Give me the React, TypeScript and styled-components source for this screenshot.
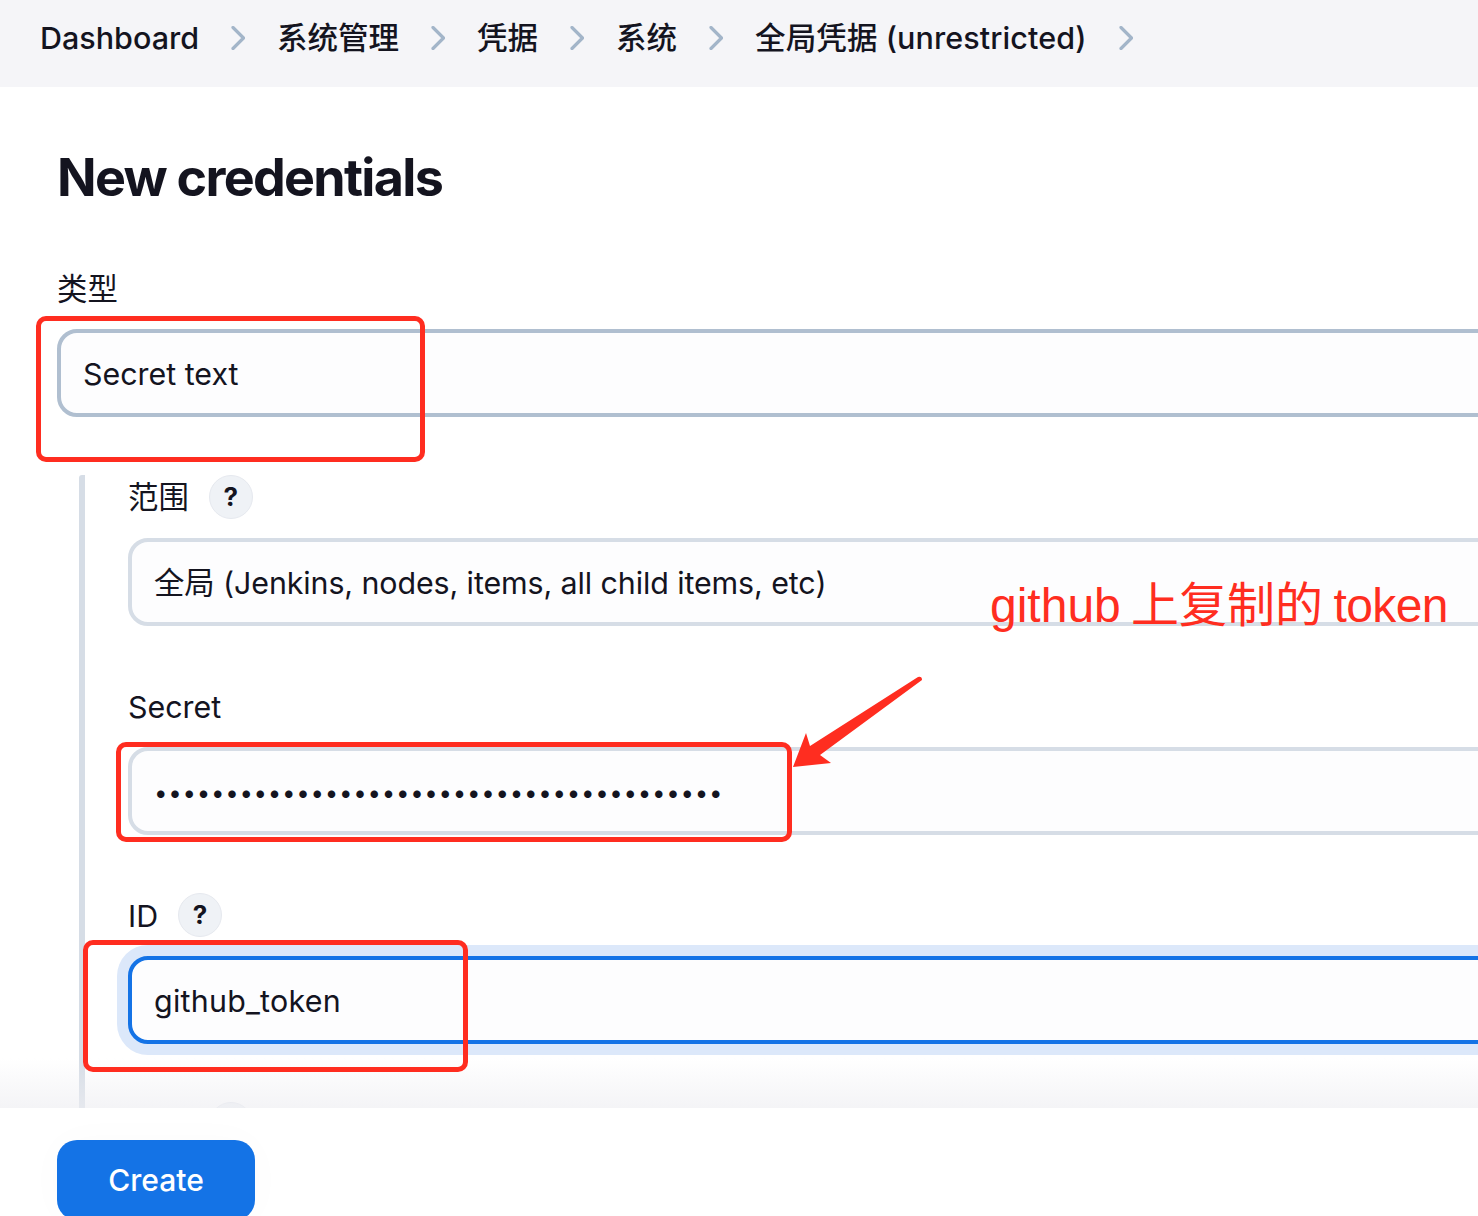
import React from "react"
import styled, { createGlobalStyle } from "styled-components"

const GlobalStyle = createGlobalStyle`
    html, body {
        margin: 0;
        padding: 0;
        background: #fff;
    }
    body {
        font-family: Inter, "Noto Sans CJK SC", sans-serif;
        color: #14141f;
    }
`

const Page = styled.div`
    position: relative;
    width: 1478px;
    height: 1216px;
    overflow: hidden;
    background: #fff;
`

const Breadcrumbs = styled.nav`
    display: flex;
    align-items: center;
    gap: 32px;
    height: 87px;
    padding: 0 0 11px 40px;
    box-sizing: border-box;
    background: #f5f5f8;
    font-size: 30.5px;
    font-weight: 500;
`

const Crumb = styled.span`
    white-space: nowrap;
    line-height: 40px;
    &:nth-last-of-type(1) {
        letter-spacing: 0.1px;
    }
`

const Title = styled.h1`
    margin: 0;
    padding: 57px 0 0 57px;
    font-size: 52px;
    line-height: 68px;
    font-weight: 700;
    letter-spacing: -1.7px;
`

const Form = styled.div`
    width: 1700px;
    padding: 54px 0 0 57px;
`

const Row = styled.div`
    margin-bottom: 58px;
`

const LabelRow = styled.div`
    display: flex;
    align-items: center;
    gap: 20px;
    height: 44px;
    margin-bottom: 19px;
    font-size: 30.4px;
    font-weight: 400;
    line-height: 40px;
`

const LabelText = styled.span`
    padding-top: 2px;
`

const Help = styled.span`
    display: flex;
    align-items: center;
    justify-content: center;
    width: 44px;
    height: 44px;
    box-sizing: border-box;
    border-radius: 50%;
    background: #eff2f6;
    border: 1px solid #e6e9ef;
    font-size: 26px;
    font-weight: 700;
`

const Field = styled.input<{ $tone: "strong" | "soft" | "focus" }>`
    display: block;
    width: 100%;
    height: 88px;
    box-sizing: border-box;
    padding: 2px 22px 0;
    border: 4px solid ${p => (p.$tone === "strong" ? "#b0bfd0" : p.$tone === "focus" ? "#1473e6" : "#d6dde6")};
    border-radius: 20px;
    background: #fdfdfe;
    box-shadow: ${p => (p.$tone === "focus" ? "0 0 0 11px #dce8fa" : "none")};
    font-family: Inter, "Noto Sans CJK SC", sans-serif;
    font-size: 30.4px;
    line-height: 40px;
    color: #14141f;
    outline: none;
`

const ScopeField = styled(Field)`
    padding: 0 22px 2px;
    letter-spacing: -0.1px;
`

const TokenField = styled(Field)`
    letter-spacing: 0.25px;
`

const SecretField = styled(Field)`
    font-size: 24px;
    letter-spacing: 0.73px;
`

const Nested = styled.div`
    padding-left: 43px;
    margin-left: 22px;
    border-left: 6px solid #d6dde6;
    border-radius: 3px;
`

const BottomBar = styled.div`
    position: absolute;
    left: 0;
    right: 0;
    bottom: 0;
    height: 108px;
    padding: 32px 0 0 57px;
    box-sizing: border-box;
    background: #fff;

    &::before {
        content: "";
        position: absolute;
        left: 0;
        right: 0;
        top: -50px;
        height: 50px;
        background: linear-gradient(to bottom, rgba(238, 238, 242, 0), rgba(238, 238, 242, 0.65));
    }
`

const CreateButton = styled.button`
    display: block;
    width: 198px;
    height: 80px;
    border: none;
    border-radius: 20px;
    background: #1473e6;
    color: #fff;
    font-family: Inter, sans-serif;
    font-size: 30px;
    font-weight: 500;
    box-shadow: 0 0 40px rgba(20, 20, 31, 0.02);
`

const Highlight = styled.div<{ $left: number; $top: number; $width: number; $height: number }>`
    position: absolute;
    left: ${p => p.$left}px;
    top: ${p => p.$top}px;
    width: ${p => p.$width}px;
    height: ${p => p.$height}px;
    box-sizing: border-box;
    border: 5px solid #ff2d20;
    border-radius: 10px;
`

const Note = styled.div`
    position: absolute;
    left: 990px;
    top: 576px;
    font-family: "Liberation Sans", "Noto Sans CJK SC", sans-serif;
    font-size: 48px;
    line-height: 60px;
    word-spacing: -3px;
    color: #ff2d20;
    white-space: nowrap;
`

const NoteTail = styled.span`
    letter-spacing: -0.6px;
`

const Arrow = styled.svg`
    position: absolute;
    left: 785px;
    top: 670px;
`

const Chevron = () => (
    <svg width="14" height="24" viewBox="0 0 14 24" fill="none">
        <path d="M2 1.5 L12.5 12 L2 22.5" stroke="#a3b5c9" strokeWidth="3.2" strokeLinecap="round" strokeLinejoin="round" />
    </svg>
)

const crumbs = ["Dashboard", "系统管理", "凭据", "系统", "全局凭据 (unrestricted)"]

const App: React.FC = () => {
    return (
        <Page>
            <GlobalStyle />
            <Breadcrumbs>
                {crumbs.map(c => (
                    <React.Fragment key={c}>
                        <Crumb>{c}</Crumb>
                        <Chevron />
                    </React.Fragment>
                ))}
            </Breadcrumbs>
            <Title>New credentials</Title>
            <Form>
                <Row>
                    <LabelRow><LabelText>类型</LabelText></LabelRow>
                    <Field $tone="strong" readOnly value="Secret text" />
                </Row>
                <Nested>
                    <Row>
                        <LabelRow>范围<Help>?</Help></LabelRow>
                        <ScopeField $tone="soft" readOnly value="全局 (Jenkins, nodes, items, all child items, etc)" />
                    </Row>
                    <Row>
                        <LabelRow><LabelText>Secret</LabelText></LabelRow>
                        <SecretField $tone="soft" readOnly type="password" value={"x".repeat(40)} />
                    </Row>
                    <Row>
                        <LabelRow><LabelText>ID</LabelText><Help>?</Help></LabelRow>
                        <TokenField $tone="focus" readOnly value="github_token" />
                    </Row>
                    <Row>
                        <LabelRow>描述<Help>?</Help></LabelRow>
                        <Field $tone="soft" readOnly value="" />
                    </Row>
                </Nested>
            </Form>
            <BottomBar>
                <CreateButton>Create</CreateButton>
            </BottomBar>
            <Highlight $left={36} $top={316} $width={389} $height={146} />
            <Highlight $left={116} $top={742} $width={676} $height={100} />
            <Highlight $left={83} $top={940} $width={385} $height={132} />
            <Note>github 上复制的 <NoteTail>token</NoteTail></Note>
            <Arrow width="145" height="105" viewBox="0 0 145 105">
                <path d="M8 97 L21 63 L25 76 L133 7 Q137 6 137 10 L35 85 L46 93 Z" fill="#ff2d20" />
            </Arrow>
        </Page>
    )
}

export default App
